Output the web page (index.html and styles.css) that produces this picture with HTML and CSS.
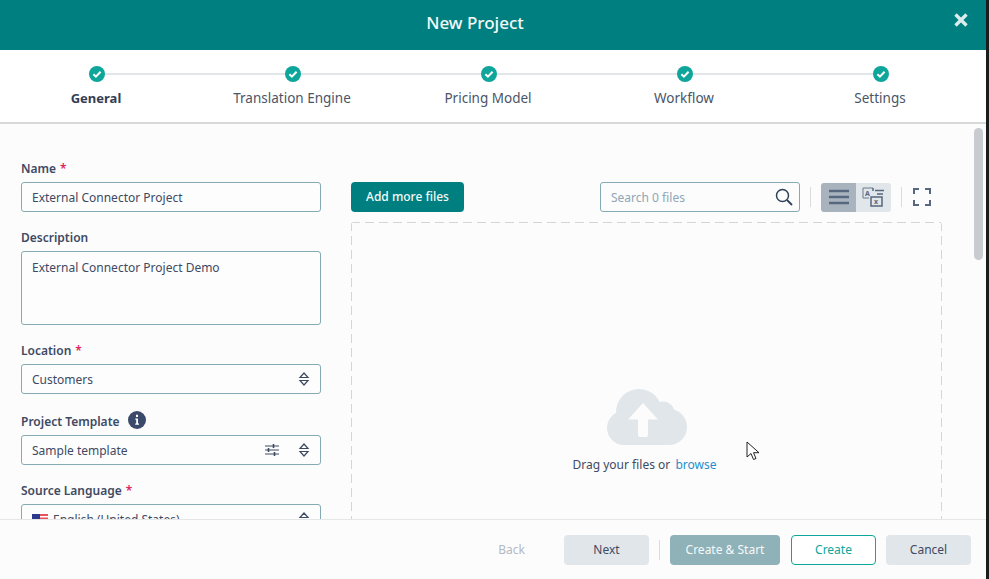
FILE: index.html
```html
<!DOCTYPE html>
<html lang="en">
<head>
  <meta charset="UTF-8" />
  <title>New Project</title>
  <link rel="stylesheet" href="styles.css">
</head>
<body>
  <div class="dialog">
    <header class="top">
      <h1>New Project</h1>
      <svg class="close" width="16" height="16" viewBox="0 0 16 16"><path d="M2.5 2.5l11 11M13.5 2.5l-11 11" stroke="#dcecec" stroke-width="3.4" fill="none"/></svg>
    </header>

    <nav class="steps">
      <div class="step active"><span class="dot"><svg width="16" height="16" viewBox="0 0 16 16"><circle cx="8" cy="8" r="8" fill="#0ea59b"/><path d="M4.4 8.2l2.5 2.4 4.700-4.800" stroke="#fff" stroke-width="2" fill="none"/></svg></span><span>General</span></div>
      <div class="step"><span class="dot"><svg width="16" height="16" viewBox="0 0 16 16"><circle cx="8" cy="8" r="8" fill="#0ea59b"/><path d="M4.4 8.2l2.5 2.4 4.700-4.800" stroke="#fff" stroke-width="2" fill="none"/></svg></span><span>Translation Engine</span></div>
      <div class="step"><span class="dot"><svg width="16" height="16" viewBox="0 0 16 16"><circle cx="8" cy="8" r="8" fill="#0ea59b"/><path d="M4.4 8.2l2.5 2.4 4.700-4.800" stroke="#fff" stroke-width="2" fill="none"/></svg></span><span>Pricing Model</span></div>
      <div class="step"><span class="dot"><svg width="16" height="16" viewBox="0 0 16 16"><circle cx="8" cy="8" r="8" fill="#0ea59b"/><path d="M4.4 8.2l2.5 2.4 4.700-4.800" stroke="#fff" stroke-width="2" fill="none"/></svg></span><span>Workflow</span></div>
      <div class="step"><span class="dot"><svg width="16" height="16" viewBox="0 0 16 16"><circle cx="8" cy="8" r="8" fill="#0ea59b"/><path d="M4.4 8.2l2.5 2.4 4.700-4.800" stroke="#fff" stroke-width="2" fill="none"/></svg></span><span>Settings</span></div>
    </nav>

    <main class="body">
      <div class="content">
        <section class="form">
          <label class="lbl">Name <i>*</i></label>
          <div class="field">External Connector Project</div>

          <label class="lbl">Description</label>
          <div class="field area">External Connector Project Demo</div>

          <label class="lbl">Location <i>*</i></label>
          <div class="field">Customers
            <svg class="updown" width="12" height="16" viewBox="0 0 12 16"><path d="M2 6.500L6 2l4 4.500zM2 9.500L6 14l4-4.500z" fill="none" stroke="#3e4a63" stroke-width="1.200"/></svg>
          </div>

          <label class="lbl tpl">Project Template
            <svg class="info" width="18" height="18" viewBox="0 0 18 18"><circle cx="9" cy="9" r="9" fill="#3b4a6b"/><path d="M7.300 7.500H10v5h1v1.300H7.200v-1.300h1v-3.700h-.9zM8 3.800h2v2.200H8z" fill="#fff"/></svg>
          </label>
          <div class="field">Sample template
            <svg class="tune" width="16" height="14" viewBox="0 0 16 14"><path d="M1 3h14M1 7h14M1 11h14" stroke="#3e4a63" stroke-width="1.100"/><path d="M9.500 1v4M4.500 5v4M10.500 9v4" stroke="#3e4a63" stroke-width="1.600"/></svg>
            <svg class="updown" width="12" height="16" viewBox="0 0 12 16"><path d="M2 6.500L6 2l4 4.500zM2 9.500L6 14l4-4.500z" fill="none" stroke="#3e4a63" stroke-width="1.200"/></svg>
          </div>

          <label class="lbl">Source Language <i>*</i></label>
          <div class="field">
            <svg class="flag" width="16" height="11" viewBox="0 0 16 11"><rect width="16" height="11" fill="#e8505b"/><rect y="2" width="16" height="1.500" fill="#fff"/><rect y="5.500" width="16" height="1.500" fill="#fff"/><rect width="8" height="6" fill="#2b3a8c"/></svg>
            English (United States)
            <svg class="updown" width="12" height="16" viewBox="0 0 12 16"><path d="M2 6.500L6 2l4 4.500zM2 9.500L6 14l4-4.500z" fill="none" stroke="#3e4a63" stroke-width="1.200"/></svg>
          </div>
        </section>

        <section class="files">
          <div class="toolbar">
            <button class="add">Add more files</button>
            <div class="tools">
              <div class="search">
                <span>Search 0 files</span>
                <svg width="18" height="18" viewBox="0 0 18 18"><circle cx="7.500" cy="7.500" r="6" fill="none" stroke="#2f4257" stroke-width="1.500"/><path d="M12 12l5 5" stroke="#2f4257" stroke-width="1.800"/></svg>
              </div>
              <span class="sep"></span>
              <div class="views">
                <span class="view on"><svg width="22" height="16" viewBox="0 0 22 16"><path d="M1 2h20M1 8h20M1 14h20" stroke="#56677f" stroke-width="2.400"/></svg></span>
                <span class="view"><svg width="24" height="20" viewBox="0 0 24 20"><path d="M11 1H1v10h6" fill="none" stroke="#6b7a8c" stroke-width="1"/><path d="M11 1v3M13 3.500h9M15 7h6" stroke="#56677f" stroke-width="1.500"/><text x="3" y="9" class="gl">A</text><rect x="9" y="10" width="11" height="9" fill="none" stroke="#56677f" stroke-width="1.500"/><text x="12" y="17.200" class="gl">x</text></svg></span>
              </div>
              <span class="sep"></span>
              <svg class="full" width="18" height="18" viewBox="0 0 18 18"><path d="M1 6V1h5M12 1h5v5M17 12v5h-5M6 17H1v-5" fill="none" stroke="#56677f" stroke-width="2"/></svg>
            </div>
          </div>
          <div class="drop">
            <svg class="cloud" width="80" height="56" viewBox="0 0 80 56">
              <g fill="#e1e6ea"><circle cx="32" cy="23" r="23"/><circle cx="56" cy="24" r="11.500"/><circle cx="62" cy="38" r="18"/><circle cx="17" cy="39" r="17"/><rect x="17" y="30" width="45" height="26"/></g>
              <path d="M36 14L21 30.500h10V46a2 2 0 0 0 2 2h6a2 2 0 0 0 2-2V30.500h10z" fill="#fcfcfc"/>
            </svg>
            <p>Drag your files or <a>browse</a></p>
          </div>
        </section>
      </div>
      <div class="scroll"><span></span></div>
    </main>

    <footer class="foot">
      <span class="back">Back</span>
      <button class="btn grey">Next</button>
      <span class="sep"></span>
      <button class="btn start">Create &amp; Start</button>
      <button class="btn line">Create</button>
      <button class="btn grey">Cancel</button>
    </footer>
  </div>

  <svg class="cursor" width="14" height="20" viewBox="0 0 14 20"><path d="M1 1v15l4-3.500 2.500 6 2.500-1-2.500-5.800H13z" fill="#fff" stroke="#222" stroke-width="1"/></svg>
</body>
</html>
```

FILE: styles.css
```css
* {
  box-sizing: border-box;
}
html, body {
  margin: 0;
  height: 100%;
  overflow: hidden;
}
body {
  font-family: "Noto Sans", "Open Sans", sans-serif;
  font-size: 12px;
  color: #3e4a63;
  background: #1c1c1c;
  position: relative;
}
.dialog {
  width: 986px;
  height: 579px;
  display: flex;
  flex-direction: column;
  background: #fcfcfc;
}
.top {
  height: 50px;
  flex: none;
  background: #007f80;
  color: #f4fafa;
  display: flex;
  align-items: center;
  justify-content: center;
  padding-right: 36px;
  position: relative;
}
.top h1 {
  margin: 0 0 6px;
  font-size: 17px;
  font-weight: 500;
}
.close {
  position: absolute;
  right: 17px;
  top: 12px;
}

.steps {
  height: 74px;
  flex: none;
  display: grid;
  grid-template-columns: repeat(5, 196px);
  justify-content: center;
  border-bottom: 2px solid #d9d9d9;
  background: #fff;
  padding: 16px 10px 0 0;
}
.step {
  display: flex;
  flex-direction: column;
  align-items: center;
  gap: 7px;
  position: relative;
  font-size: 13.5px;
  color: #4a5568;
}
.step::before {
  content: "";
  position: absolute;
  top: 7px;
  left: -50%;
  width: 100%;
  height: 2px;
  background: #e1e6ea;
}
.step:first-child::before {
  display: none;
}
.step.active {
  font-size: 13px;
  font-weight: 700;
  color: #343d52;
}
.dot {
  height: 16px;
  position: relative;
  left: 1px;
  z-index: 1;
}

.body {
  flex: 1;
  min-height: 0;
  display: flex;
  overflow: hidden;
  border-bottom: 1px solid #e4e6e8;
}
.content {
  flex: 1;
  display: flex;
  gap: 30px;
  padding: 36px 0 0 21px;
}
.form {
  width: 300px;
  flex: none;
}
.lbl {
  display: flex;
  align-items: center;
  gap: 4px;
  height: 17px;
  margin-bottom: 5px;
  font-weight: 600;
  color: #3e4a63;
}
.lbl i {
  color: #e0245e;
  font-style: normal;
}
.lbl.tpl {
  gap: 8px;
  margin-top: 19px;
}
.field {
  height: 30px;
  border: 1px solid #85aab3;
  border-radius: 3px;
  background: #fdfdfd;
  padding: 0 10px;
  margin-bottom: 17px;
  display: flex;
  align-items: center;
  position: relative;
  white-space: nowrap;
}
.field.area {
  height: 74px;
  align-items: flex-start;
  padding-top: 7px;
}
.updown {
  position: absolute;
  right: 10px;
  top: 6px;
}
.tune {
  position: absolute;
  right: 40px;
  top: 7px;
}
.flag {
  margin-right: 5px;
}
.info {
  margin-top: -4px;
}

.files {
  width: 591px;
  flex: none;
  padding-top: 0;
  margin-top: -0px;
}
.toolbar {
  display: flex;
  justify-content: space-between;
  align-items: center;
  height: 30px;
  margin: 22px 0 10px;
}
.add {
  width: 113px;
  height: 30px;
  border: 0;
  border-radius: 4px;
  background: #007f80;
  color: #f4fafa;
  font: 500 12px "Noto Sans", sans-serif;
  padding-bottom: 2px;
}
.tools {
  display: flex;
  align-items: center;
}
.search {
  width: 200px;
  height: 30px;
  border: 1px solid #85aab3;
  border-radius: 3px;
  padding: 0 6px 0 10px;
  display: flex;
  align-items: center;
  justify-content: space-between;
  color: #8fa6b5;
}
.sep {
  width: 1px;
  height: 20px;
  background: #d9dcdf;
  margin: 0 10px;
}
.views {
  display: flex;
  border-radius: 3px;
  overflow: hidden;
  height: 29px;
}
.view {
  width: 35px;
  background: #e1e6ea;
  display: flex;
  align-items: center;
  justify-content: center;
}
.view.on {
  background: #a9b3bd;
}
.gl {
  font-size: 7px;
  font-weight: 700;
  fill: #56677f;
}
.full {
  margin: 0 11px 0 1px;
}
.drop {
  height: 400px;
  border-radius: 3px;
  background:
    repeating-linear-gradient(90deg, #d3d6d9 0 9px, transparent 9px 14px) top / 100% 1px no-repeat,
    repeating-linear-gradient(180deg, #d3d6d9 0 9px, transparent 9px 14px) left / 1px 100% no-repeat,
    repeating-linear-gradient(180deg, #d3d6d9 0 9px, transparent 9px 14px) right / 1px 100% no-repeat;
  display: flex;
  flex-direction: column;
  align-items: center;
  padding-top: 167px;
}
.drop p {
  margin: 11px 4px 0 0;
}
.drop a {
  color: #1d8fcf;
  margin-left: 2px;
}

.scroll {
  width: 14px;
  flex: none;
  padding: 4px 3px 0 2px;
}
.scroll span {
  display: block;
  height: 132px;
  width: 9px;
  border-radius: 5px;
  background: #c8ccd0;
}

.foot {
  height: 59px;
  flex: none;
  display: flex;
  align-items: center;
  justify-content: flex-end;
  padding: 0 15px 0 0;
  gap: 10px;
}
.back {
  color: #b4b9c2;
  margin-right: 29px;
}
.foot .sep {
  margin: 0;
}
.btn {
  width: 85px;
  height: 30px;
  border: 0;
  border-radius: 4px;
  font: 12px "Noto Sans", sans-serif;
  color: #3e4a63;
}
.btn.grey {
  background: #e1e6ea;
}
.btn.start {
  width: 110px;
  margin-right: 1px;
  background: #8fb1b8;
  color: #f6f9fa;
}
.btn.line {
  background: #fff;
  border: 1px solid #0ea59b;
  color: #0ea59b;
}
.cursor {
  position: absolute;
  left: 746px;
  top: 441px;
}
```
